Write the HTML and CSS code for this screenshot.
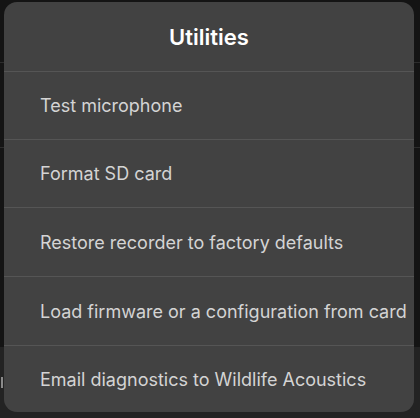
FILE: index.html
```html
<!DOCTYPE html>
<html lang="en">
<head>
    <meta charset="UTF-8">
    <meta name="viewport" content="width=device-width, initial-scale=1.0">
    <title>Utilities</title>
    <link rel="stylesheet" href="styles.css">
</head>
<body>
    <!-- Settings screen behind the popover -->
    <div class="screen">
        <div class="screen-row screen-row-top"></div>
        <div class="screen-row screen-row-mid"></div>
        <div class="screen-fill"></div>
        <div class="screen-toolbar">
            <span class="toolbar-mark"></span>
        </div>
    </div>

    <!-- Utilities popover -->
    <div class="popover">
        <h1 class="popover-title">Utilities</h1>
        <ul class="menu">
            <li class="menu-item">Test microphone</li>
            <li class="menu-item">Format SD card</li>
            <li class="menu-item">Restore recorder to factory defaults</li>
            <li class="menu-item">Load firmware or a configuration from card</li>
            <li class="menu-item">Email diagnostics to Wildlife Acoustics</li>
        </ul>
    </div>
</body>
</html>
```

FILE: styles.css
```css
body {
    margin: 0;
    padding: 0;
    width: 420px;
    height: 418px;
    overflow: hidden;
    background-color: #141414;
    font-family: Inter, "Noto Sans", Arial, sans-serif;
    position: relative;
}
.screen {
    display: flex;
    flex-direction: column;
    height: 418px;
}
.screen-row {
    border-bottom: 1px solid #2c2c2c;
}
.screen-row-top {
    height: 62px;
}
.screen-row-mid {
    height: 84px;
}
.screen-fill {
    height: 199px;
}
.screen-toolbar {
    flex: 1;
    background-color: #232323;
    padding: 30px 0 0 1px;
}
.toolbar-mark {
    display: block;
    width: 2px;
    height: 11px;
    background-color: #8a8a8a;
}
.popover {
    position: absolute;
    left: 4px;
    top: 2px;
    width: 410px;
    height: 410px;
    background-color: #424242;
    border-radius: 13px;
    overflow: hidden;
}
.popover-title {
    margin: 0;
    height: 69px;
    display: flex;
    align-items: center;
    justify-content: center;
    font-size: 22px;
    font-weight: 600;
    color: #fff;
}
.menu {
    list-style: none;
    margin: 0;
    padding: 0;
}
.menu-item {
    height: 67px;
    border-top: 1px solid #555;
    display: flex;
    align-items: center;
    padding-left: 36px;
    font-size: 18px;
    color: #d4d4d4;
    white-space: nowrap;
}
.menu-item:nth-child(3),
.menu-item:nth-child(4) {
    height: 68px;
}
```
